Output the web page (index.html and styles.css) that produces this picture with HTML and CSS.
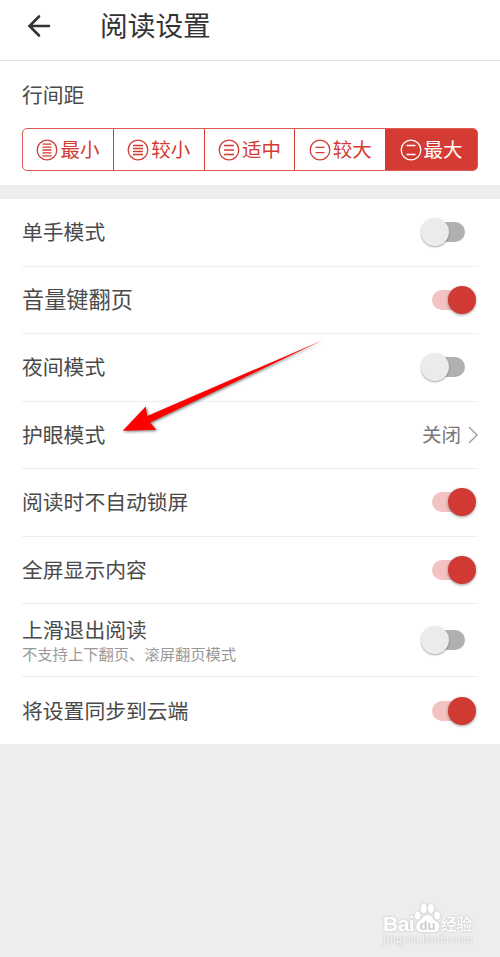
FILE: index.html
```html
<!DOCTYPE html>
<html lang="zh-CN">
<head>
<meta charset="utf-8">
<title>阅读设置</title>
<link rel="stylesheet" href="styles.css">
</head>
<body>
<main class="screen">
  <header class="header">
    <svg class="back" viewBox="0 0 24 24"><path d="M22 12H3M12 2.500L2.500 12L12 21.500"/></svg>
    <h1>阅读设置</h1>
  </header>
  <section class="spacing">
    <h2>行间距</h2>
    <div class="segments">
      <div class="segment"><svg viewBox="0 0 22 22"><circle cx="11" cy="11" r="9.800"/><path d="M6.500 5.200h9M6.500 8.100h9M6.500 11h9M6.500 13.900h9M6.500 16.800h9"/></svg><span>最小</span></div>
      <div class="segment"><svg viewBox="0 0 22 22"><circle cx="11" cy="11" r="9.800"/><path d="M6 6.500h10M6 9.500h10M6 12.500h10M6 15.500h10"/></svg><span>较小</span></div>
      <div class="segment"><svg viewBox="0 0 22 22"><circle cx="11" cy="11" r="9.800"/><path d="M6 6.500h10M6 11h10M6 15.500h10"/></svg><span>适中</span></div>
      <div class="segment"><svg viewBox="0 0 22 22"><circle cx="11" cy="11" r="9.800"/><path d="M6.500 8.300h9M6.500 13.700h9"/></svg><span>较大</span></div>
      <div class="segment selected"><svg viewBox="0 0 22 22"><circle cx="11" cy="11" r="9.800"/><path d="M6.500 6.500h9M6.500 15.500h9"/></svg><span>最大</span></div>
    </div>
  </section>
  <section class="list">
    <div class="row"><span>单手模式</span><i class="switch"></i></div>
    <div class="row"><span class="wide">音量键翻页</span><i class="switch on"></i></div>
    <div class="row"><span>夜间模式</span><i class="switch"></i></div>
    <div class="row"><span>护眼模式</span><div class="value"><span>关闭</span><svg viewBox="0 0 10 18"><path d="M1 1l8 8-8 8"/></svg></div></div>
    <div class="row"><span>阅读时不自动锁屏</span><i class="switch on"></i></div>
    <div class="row"><span>全屏显示内容</span><i class="switch on"></i></div>
    <div class="row tall"><div class="label"><span>上滑退出阅读</span><small>不支持上下翻页、滚屏翻页模式</small></div><i class="switch"></i></div>
    <div class="row"><span>将设置同步到云端</span><i class="switch on"></i></div>
  </section>
  <svg class="pointer" viewBox="0 0 224 100"><path d="M222 0.500L47.300 76L45.700 66.500L22.700 90.700L56.300 89.700L50 82.500Z"/></svg>
  <div class="watermark">
    <div class="brand"><span class="bai">Bai</span><svg viewBox="0 0 27 30"><ellipse cx="3.700" cy="12.500" rx="3" ry="4"/><ellipse cx="9.800" cy="5.500" rx="3.200" ry="4.500"/><ellipse cx="17" cy="5.500" rx="3.200" ry="4.500"/><ellipse cx="23" cy="12.500" rx="3" ry="4"/><path d="M13.500 12C9 12 8 16 4 19C0 24 3 29 8 29H19C24 30 28 23 23 19C19 16 18 12 13.500 12Z"/><text x="5.500" y="26.500">du</text></svg><span class="jy">经验</span></div>
    <div class="site">jingyan.baidu.com</div>
  </div>
</main>
</body>
</html>
```

FILE: styles.css
```css
* { box-sizing: border-box; }
body {
  margin: 0;
  background: #ededed;
  color: #4a4a4a;
  font-family: "Noto Sans CJK SC", sans-serif;
}
.screen { position: relative; height: 957px; overflow: hidden; }
svg { fill: none; stroke: currentColor; flex: none; }
h1, h2 { margin: 0; font-weight: 400; }
.header {
  height: 61px;
  padding: 0 0 9px 27px;
  display: flex;
  align-items: center;
  gap: 49px;
  background: #fff;
  border-bottom: 1px solid #e2e2e2;
  color: #333;
}
.back { width: 24px; height: 24px; stroke-width: 2.6; stroke-linecap: round; }
h1 { font-size: 27.7px; line-height: 40px; padding-bottom: 3px; }
.spacing { height: 124px; padding: 18px 22px 0; background: #fff; }
h2 { font-size: 20.8px; line-height: 30px; }
.segments {
  display: grid;
  grid-template-columns: repeat(5, 1fr);
  height: 43px;
  margin-top: 19px;
  border: 1px solid #dc5b54;
  border-radius: 5px;
  overflow: hidden;
}
.segment {
  display: flex;
  align-items: center;
  justify-content: center;
  gap: 2px;
  color: #d33b33;
  font-size: 19.5px;
  line-height: 28px;
  border-right: 1px solid #d33b33;
}
.segment span { padding-bottom: 1px; }
.segment svg { width: 22px; height: 22px; stroke-width: 1.3; }
.segment.selected { background: #d33b33; color: #fff; }
.list { margin-top: 14px; padding: 0 22px; background: #fff; }
.row {
  height: 67.5px;
  display: flex;
  align-items: center;
  justify-content: space-between;
  font-size: 20.8px;
  line-height: 30px;
  border-bottom: 1px solid #eee;
}
.row > span { padding-bottom: 2px; }
.row .wide { font-size: 22.2px; padding-bottom: 3px; }
.row.tall { height: 73px; }
.row:last-child { height: 67px; border-bottom: 0; }
.label { display: flex; flex-direction: column; padding-bottom: 3px; }
.label span { line-height: 28px; }
.label small { font-size: 15.3px; line-height: 20px; color: #999; }
.switch {
  position: relative;
  width: 40px;
  height: 20px;
  margin-right: 13px;
  border-radius: 10px;
  background: #b0b0b0;
}
.switch::after {
  content: "";
  position: absolute;
  left: -4.5px;
  top: -4px;
  width: 28px;
  height: 28px;
  border-radius: 50%;
  background: #ebebeb;
  box-shadow: 0 1px 2px rgba(0, 0, 0, .35);
}
.switch.on { margin-right: 6.5px; background: #f2c3c1; }
.switch.on::after { left: 16.5px; background: #d03a33; box-shadow: 0 1px 3px rgba(0, 0, 0, .4); }
.value { display: flex; align-items: center; gap: 7px; font-size: 19.5px; color: #777; }
.value span { padding-bottom: 2px; }
.value svg { width: 10px; height: 18px; stroke: #999; stroke-width: 1.3; }
.pointer {
  position: absolute;
  left: 100px;
  top: 340px;
  width: 224px;
  height: 100px;
  overflow: visible;
  fill: #f00;
  stroke: none;
  filter: drop-shadow(1px 1.5px 1.5px rgba(0, 0, 0, .55));
}
.watermark {
  position: absolute;
  left: 383px;
  top: 902px;
  color: #fff;
  filter: drop-shadow(0 0 1px #bbb);
}
.brand { display: flex; align-items: flex-end; height: 31px; }
.bai { font: 700 21px/19px "Liberation Sans", sans-serif; width: 31px; letter-spacing: -.5px; }
.brand svg { width: 27px; height: 30px; fill: #fff; stroke: none; }
.brand text { font: 700 13px "Liberation Sans", sans-serif; fill: #ccc; }
.jy { font-size: 15.5px; font-weight: 500; line-height: 19px; }
.site { font: 11.5px/12px "Liberation Serif", serif; letter-spacing: .25px; color: #f2f2f2; }
```
